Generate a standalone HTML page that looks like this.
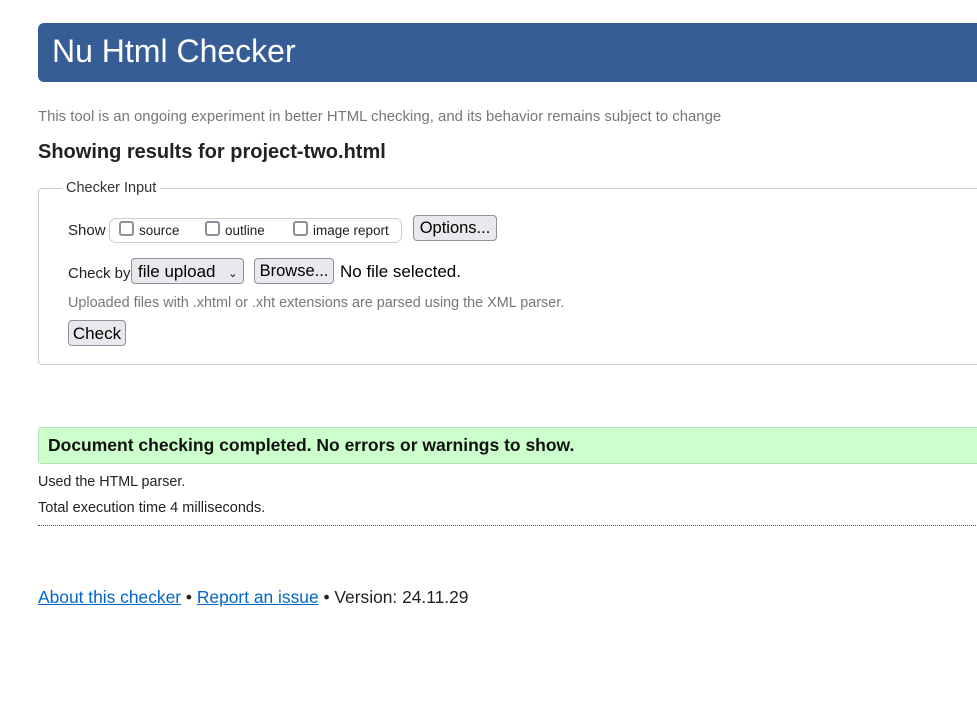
<!DOCTYPE html>
<html><head><style>
body{margin:0;width:977px;height:708px;overflow:hidden;background:#fff;font-family:"Liberation Sans",Arial,sans-serif;position:relative;color:#222}
.a{position:absolute;white-space:nowrap}
.btn{position:absolute;background:#e9e9ed;border:1px solid #8f8f9d;border-radius:4px;font-size:16px;color:#000;box-sizing:border-box;text-align:center}
.cb{position:absolute;width:15px;height:15px;border:2px solid #8f8f9d;border-radius:3px;box-sizing:border-box;background:#fff}
a{color:#0066cc;text-decoration:underline}
</style></head><body>
<div class="a" style="left:38px;top:23px;width:950px;height:59px;background:#365d95;border-radius:6px"></div>
<div class="a" style="left:52px;top:33px;font-size:32px;color:#fff">Nu Html Checker</div>
<div class="a" style="left:38px;top:109px;font-size:14.9px;color:#777">This tool is an ongoing experiment in better HTML checking, and its behavior remains subject to change</div>
<div class="a" style="left:38px;top:141px;font-size:20px;font-weight:bold;color:#222">Showing results for project-two.html</div>
<div class="a" style="left:38px;top:188px;width:960px;height:175px;border:1px solid #ccc;border-radius:4px"></div>
<div class="a" style="left:62px;top:180px;padding:0 4px;background:#fff;font-size:14.5px;color:#333">Checker Input</div>
<div class="a" style="left:68px;top:222px;font-size:15px">Show</div>
<div class="a" style="left:109px;top:218px;width:291px;height:23px;border:1px solid #ccc;border-radius:7px"></div>
<div class="cb" style="left:119px;top:221px"></div>
<div class="a" style="left:139px;top:223px;font-size:13.5px">source</div>
<div class="cb" style="left:205px;top:221px"></div>
<div class="a" style="left:225px;top:223px;font-size:13.5px">outline</div>
<div class="cb" style="left:293px;top:221px"></div>
<div class="a" style="left:313px;top:223px;font-size:13.5px">image report</div>
<div class="btn" style="left:413px;top:215px;width:84px;height:26px;line-height:25px;font-size:16.5px">Options...</div>
<div class="a" style="left:68px;top:265px;font-size:15px">Check by</div>
<div class="btn" style="left:131px;top:258px;width:113px;height:26px;line-height:25px;text-align:left;padding-left:6px;font-size:17px">file upload <span style="font-size:11px;margin-left:8px">&#8964;</span></div>
<div class="btn" style="left:254px;top:258px;width:80px;height:26px;line-height:25px;font-size:16.5px">Browse...</div>
<div class="a" style="left:340px;top:262px;font-size:17px;color:#000">No file selected.</div>
<div class="a" style="left:68px;top:295px;font-size:14.4px;color:#777">Uploaded files with .xhtml or .xht extensions are parsed using the XML parser.</div>
<div class="btn" style="left:68px;top:320px;width:58px;height:26px;line-height:25px;font-size:17px">Check</div>
<div class="a" style="left:38px;top:427px;width:960px;height:35px;background:#ccffcc;border:1px solid #bbddbb;border-radius:3px"></div>
<div class="a" style="left:48px;top:435px;font-size:17.5px;font-weight:bold;color:#111">Document checking completed. No errors or warnings to show.</div>
<div class="a" style="left:38px;top:474px;font-size:14.3px">Used the HTML parser.</div>
<div class="a" style="left:38px;top:500px;font-size:14.5px">Total execution time 4 milliseconds.</div>
<div class="a" style="left:38px;top:525px;width:960px;border-top:1px dotted #555"></div>
<div class="a" style="left:38px;top:587px;font-size:17.4px"><a>About this checker</a> • <a>Report an issue</a> • Version: 24.11.29</div>
</body></html>
